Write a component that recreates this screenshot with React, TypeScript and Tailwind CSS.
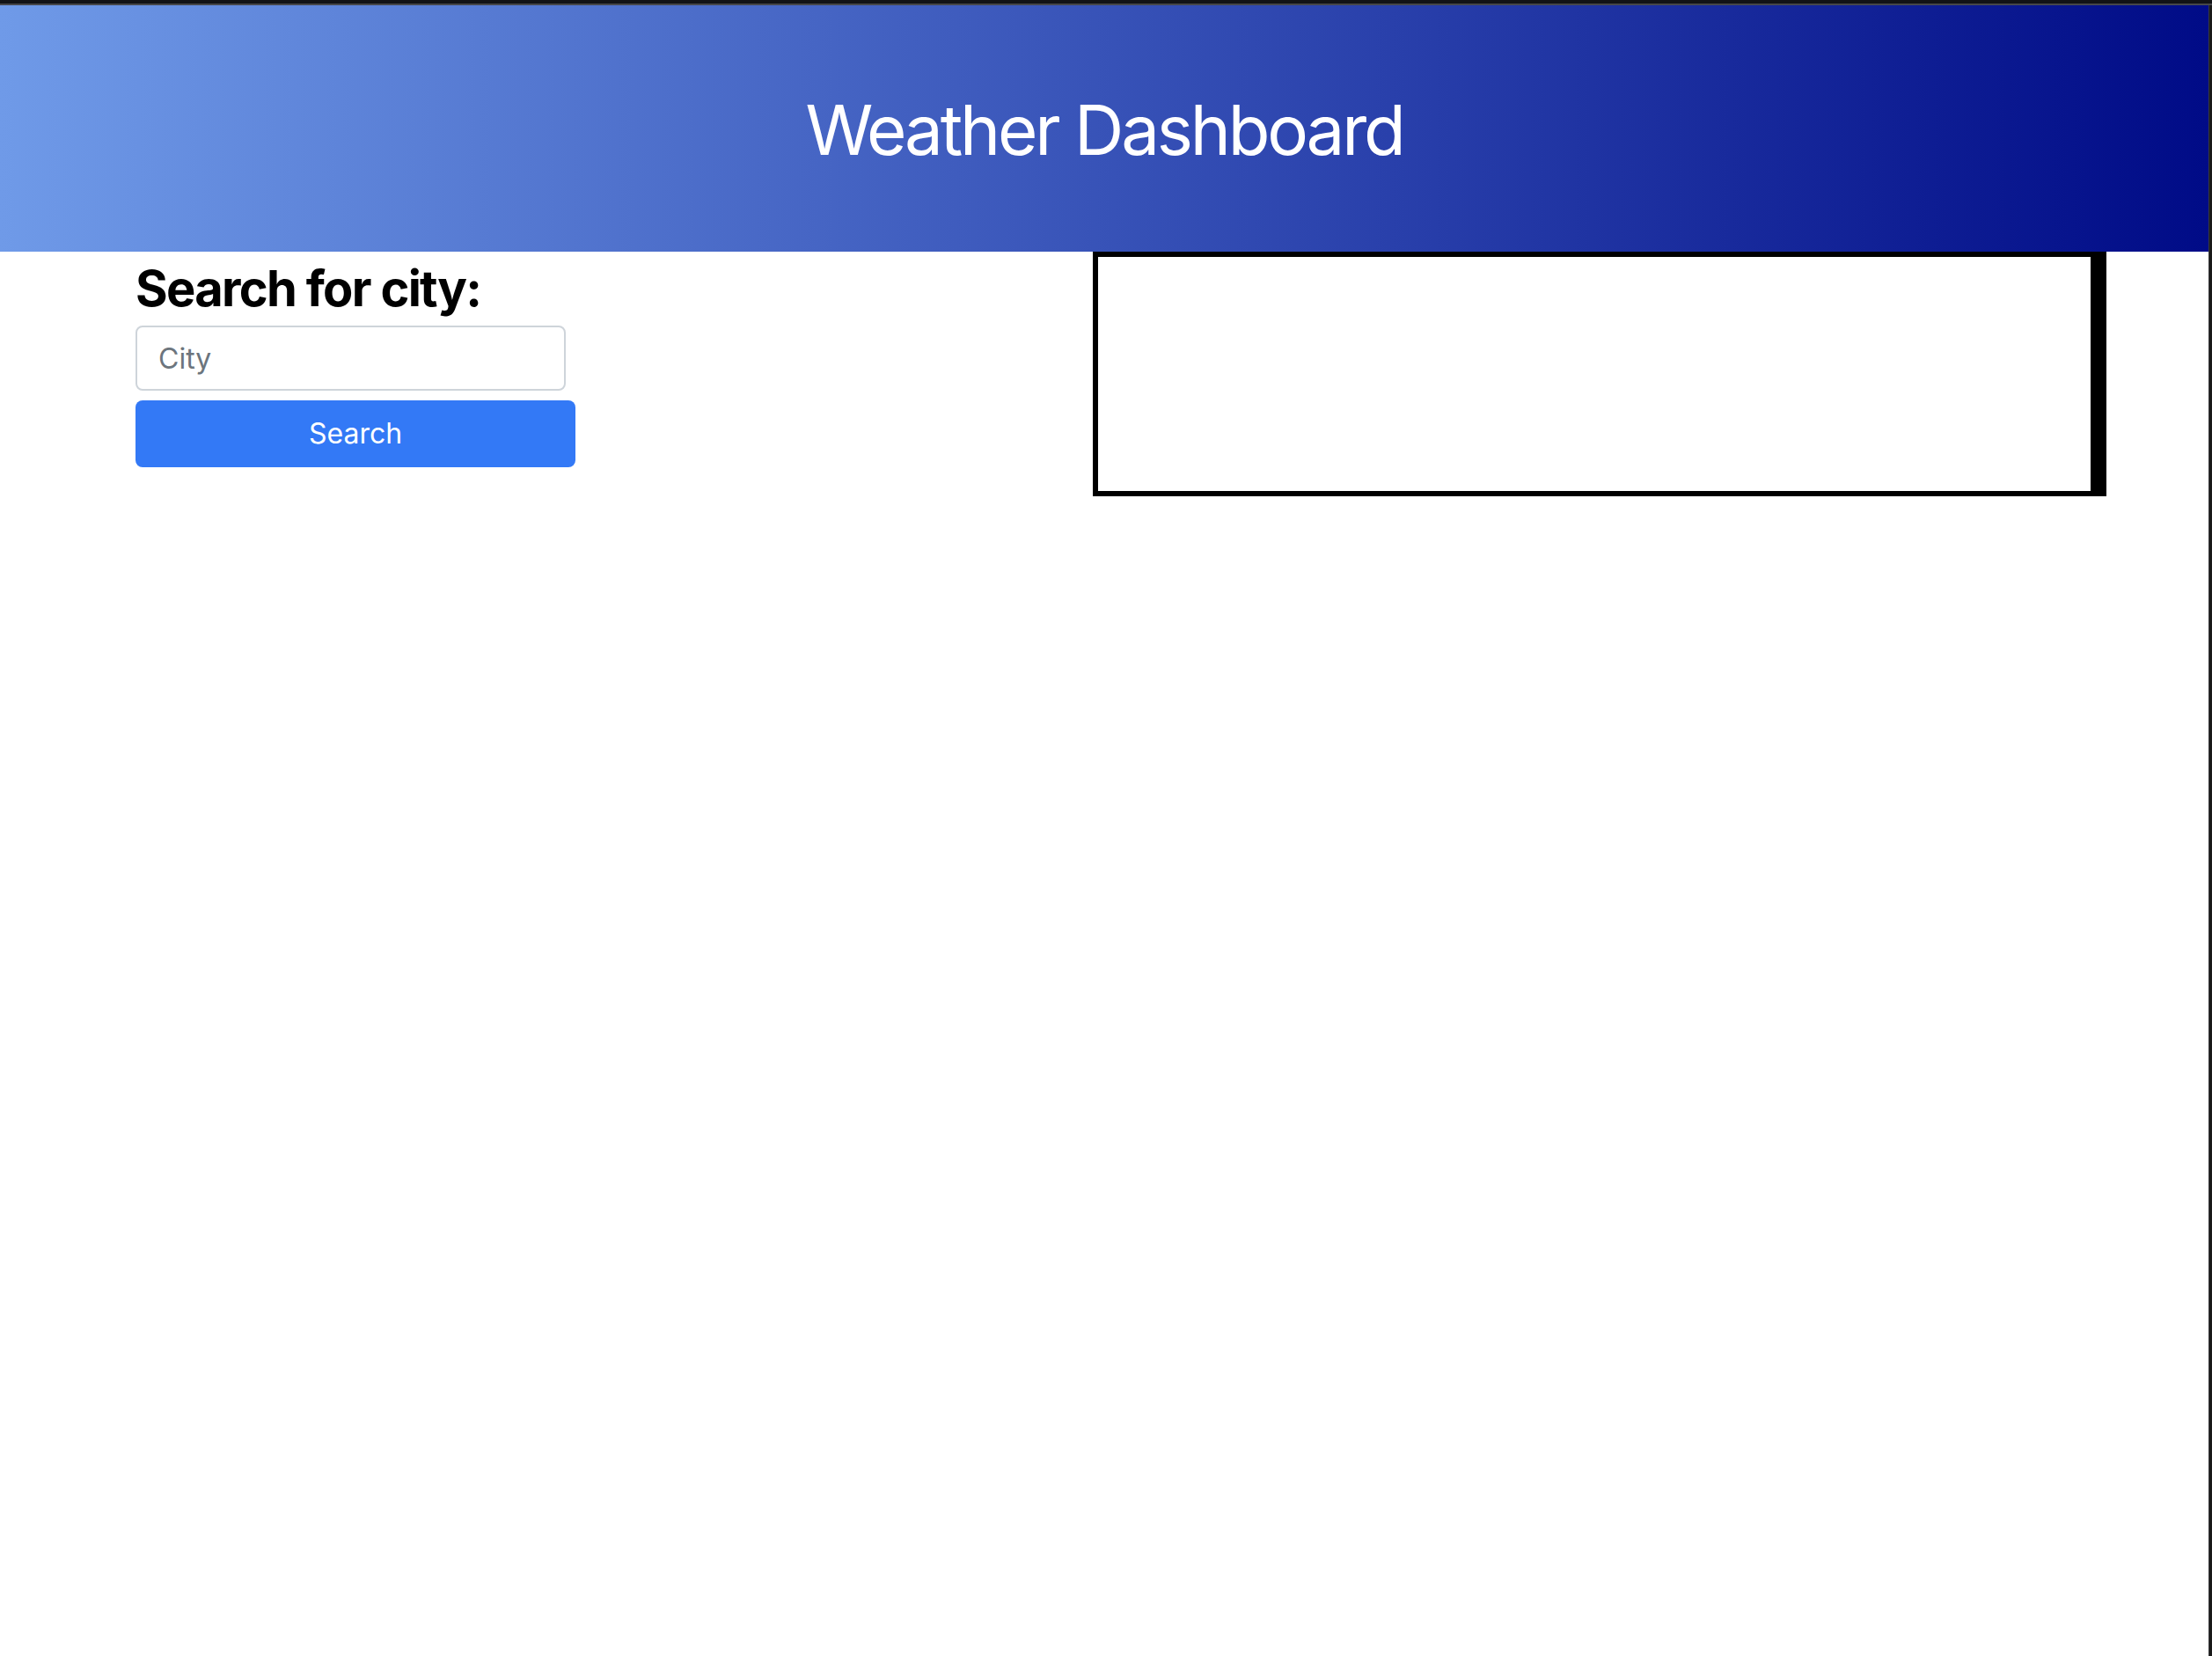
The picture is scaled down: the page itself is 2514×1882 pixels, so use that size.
import React from "react";

export default function App() {
  return (
    <div
      className="flex min-h-screen w-full flex-col bg-white"
      style={{ fontFamily: "Inter, 'Noto Sans', sans-serif" }}
    >
      <div className="h-[4px] w-full bg-[#121316]" />
      <div className="h-[2px] w-full bg-[#46474a]" />
      <div className="flex flex-1 flex-row">
        <div className="flex flex-1 flex-col">
          <header className="flex h-[280px] w-full items-center justify-center bg-[linear-gradient(to_right,#6f9ae8,#000b87)]">
            <h1 className="mt-[4px] text-[78px] font-normal leading-[1.2] tracking-[-3.2px] text-white">
              Weather Dashboard
            </h1>
          </header>
          <main className="flex flex-row items-start pl-[154px]">
            <div className="flex w-[1088px] flex-col pt-[9px]">
              <h3 className="text-[56px] font-bold leading-[67px] tracking-[-1.7px] text-black">
                Search for city:
              </h3>
              <input
                type="text"
                placeholder="City"
                className="mt-[8px] h-[74px] w-[489px] rounded-[8px] border-2 border-[#ced4da] bg-white px-[24px] text-[32px] text-[#495057] outline-none placeholder:text-[#6c757d]"
              />
              <button className="mt-[11px] h-[76px] w-[500px] rounded-[8px] bg-[#3379f6] text-[32px] font-normal text-white">
                Search
              </button>
            </div>
            <div className="h-[278px] w-[1152px] border-t-[6px] border-r-[18px] border-b-[6px] border-l-[6px] border-black bg-white" />
          </main>
        </div>
        <div className="w-[4px] border-l border-[#3a3a3c] bg-[#1a1a1a]" />
      </div>
    </div>
  );
}
